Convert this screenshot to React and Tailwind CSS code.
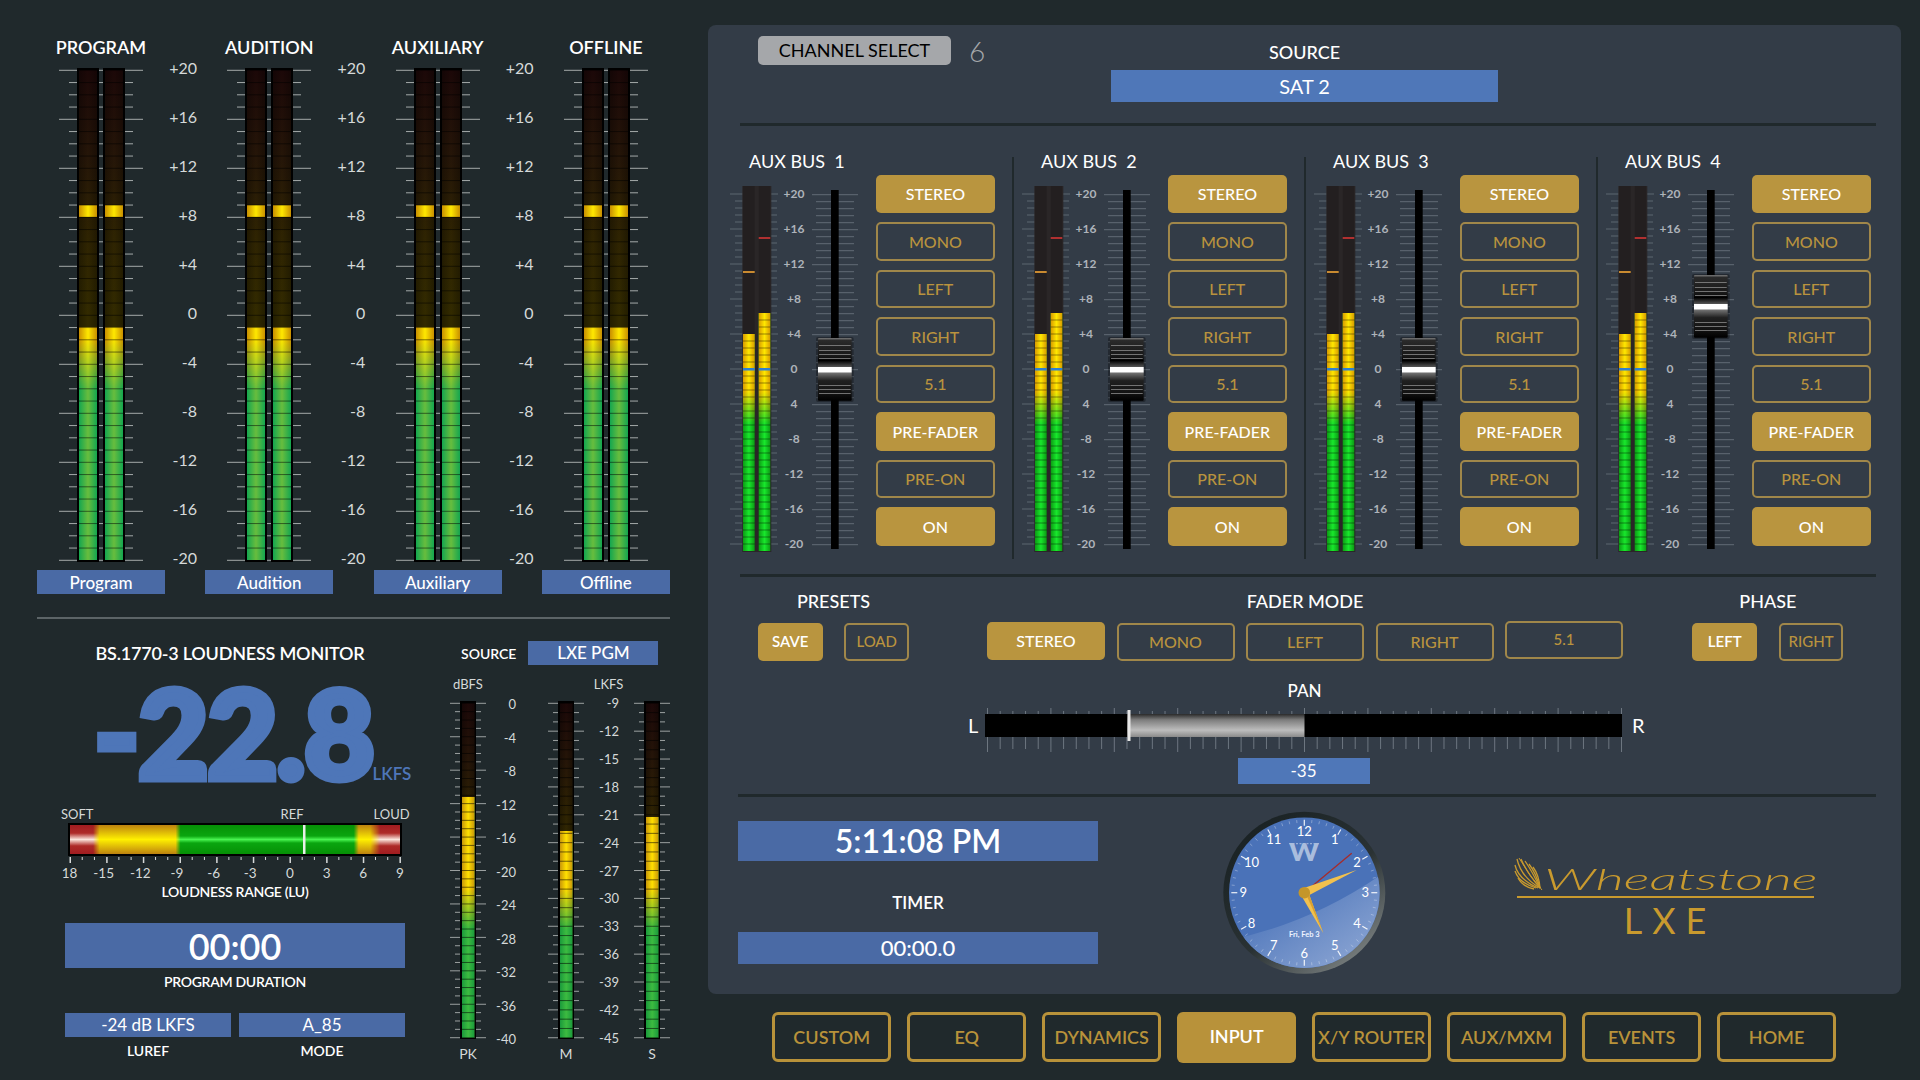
import React from 'react';

const makeTicks = (start, step, count, every) =>
  Array.from({ length: count }, (_, i) => ({ y: start + step * i, major: i % every === 0 }));

function Meter({ id, w, h, bars, frames, ticks, majorX, minorX, tickColor, bottom, yellowEnd, greenStart, green, yellow, unlit, seg, segStep }) {
  const segs = segStep ? makeTicks(ticks[0].y, segStep, Math.floor((ticks[ticks.length - 1].y - ticks[0].y) / segStep) + 1, 1) : ticks;
  return (
    <svg width={w} height={h} className="block shrink-0">
      <defs>
        <linearGradient id={`${id}g`}><stop offset="0" stopColor={green[0]} /><stop offset=".5" stopColor={green[1]} /><stop offset="1" stopColor={green[0]} /></linearGradient>
        <linearGradient id={`${id}y`}><stop offset="0" stopColor={yellow[0]} /><stop offset=".5" stopColor={yellow[1]} /><stop offset="1" stopColor={yellow[0]} /></linearGradient>
        <linearGradient id={`${id}s`}><stop offset="0" stopColor="#000" stopOpacity=".3" /><stop offset=".5" stopColor="#000" stopOpacity="0" /><stop offset="1" stopColor="#000" stopOpacity=".3" /></linearGradient>
        <linearGradient id={`${id}u`} x1="0" y1="0" x2="0" y2="1">
          {unlit.map(([o, c]) => <stop key={o} offset={o} stopColor={c} />)}
        </linearGradient>
        <linearGradient id={`${id}f`} gradientUnits="userSpaceOnUse" x1="0" x2="0" y1={yellowEnd} y2={greenStart}><stop offset="0" stopColor="#fff" /><stop offset="1" stopColor="#000" /></linearGradient>
        <mask id={`${id}m`} maskUnits="userSpaceOnUse" x="0" y="0" width={w} height={h}><rect x="0" y="0" width={w} height={h} fill={`url(#${id}f)`} /></mask>
      </defs>
      {ticks.map((t, i) => {
        const [a, b] = t.major ? majorX : minorX;
        return <rect key={i} x={a} y={t.y - 0.5} width={b - a} height="1" fill={tickColor} />;
      })}
      {frames.map((f, i) => <rect key={i} x={f.x} y="0" width={f.w} height={h} fill={f.fill} />)}
      {bars.map((b, i) => (
        <g key={i}>
          <rect x={b.x} y={b.top} width={b.w} height={bottom - b.top} fill={`url(#${id}u)`} />
          <rect x={b.x} y={b.top} width={b.w} height={bottom - b.top} fill={`url(#${id}s)`} opacity={b.shade ?? 1} />
          <rect x={b.x} y={b.level} width={b.w} height={bottom - b.level} fill={`url(#${id}g)`} />
          <rect x={b.x} y={b.level} width={b.w} height={bottom - b.level} fill={`url(#${id}y)`} mask={`url(#${id}m)`} />
          {b.peak && <rect x={b.x} y={b.peak[0]} width={b.w} height={b.peak[1]} fill={b.peak[2] || `url(#${id}y)`} />}
          {segs.map((t, k) => t.y > (segStep ? b.level : b.top) && t.y < bottom && (
            <rect key={k} x={b.x} y={t.y - 0.5} width={b.w} height="1" fill={seg} />
          ))}
          {b.blue && <rect x={b.x} y={b.blue} width={b.w} height="2.5" fill="#2f7fd0" />}
        </g>
      ))}
    </svg>
  );
}

const darkUnlit = [[0, '#1c0808'], [0.18, '#261608'], [0.34, '#2f2402'], [0.5, '#332b00'], [1, '#332b00']];

function MainColumn({ id, title, chip }) {
  return (
    <div className="flex w-[128px] flex-col items-center">
      <div className="mb-[10px] h-[22px] text-[18px] leading-[22px] font-semibold whitespace-nowrap text-white">{title}</div>
      <Meter
        id={id}
        w={84}
        h={494}
        ticks={makeTicks(2.3, 12.25, 41, 4)}
        majorX={[0, 84]}
        minorX={[10, 74]}
        tickColor="#a3a8a8"
        frames={[{ x: 18, w: 22, fill: '#000' }, { x: 44, w: 22, fill: '#000' }]}
        bars={[
          { x: 20, w: 18, top: 2, level: 259, peak: [137, 12] },
          { x: 46, w: 18, top: 2, level: 259, peak: [137, 12] },
        ]}
        bottom={492}
        yellowEnd={271}
        greenStart={322}
        green={['#14a650', '#68bd3e']}
        yellow={['#c88f00', '#ffe800']}
        unlit={darkUnlit}
        seg="rgba(0,0,0,.5)"
      />
      <div className="mt-[8px] flex h-[24px] w-[128px] items-center justify-center bg-[#4a6aa5] pt-px text-[17px] font-medium text-white">{chip}</div>
    </div>
  );
}

const mainScale = ['+20', '+16', '+12', '+8', '+4', '0', '-4', '-8', '-12', '-16', '-20'];

function MainScale() {
  return (
    <div className="flex w-[40.3px] flex-col pt-[7.7px] pr-[8.3px]">
      {mainScale.map((l) => (
        <div key={l} className="flex h-[49px] shrink-0 items-center justify-end text-[16px] text-[#d5d9d9]">{l}</div>
      ))}
    </div>
  );
}

function SmallMeter({ id, level, stepTicks, every }) {
  return (
    <Meter
      id={id}
      w={36}
      h={338}
      ticks={makeTicks(2.3, stepTicks, Math.round(334.4 / stepTicks) + 1, every)}
      majorX={[0, 36]}
      minorX={[5, 31]}
      tickColor="#9ba0a0"
      frames={[{ x: 10, w: 16, fill: '#000' }]}
      bars={[{ x: 12, w: 12.5, top: 2, level }]}
      bottom={337}
      yellowEnd={188}
      greenStart={228}
      green={['#1a9a3c', '#3dbb40']}
      yellow={['#c8960a', '#ffe000']}
      unlit={darkUnlit}
      seg="rgba(0,0,0,.55)"
    />
  );
}

const luTicks = Array.from({ length: 28 }, (_, i) => i);
const luLabels = ['-18', '-15', '-12', '-9', '-6', '-3', '0', '3', '6', '9'];

function LoudnessBar() {
  return (
    <svg width="336" height="41" className="block">
      <defs>
        <linearGradient id="luR" x1="0" y1="0" x2="0" y2="1"><stop offset="0" stopColor="#a01c20" /><stop offset=".28" stopColor="#ae2a28" /><stop offset=".5" stopColor="#fbe4dc" /><stop offset=".72" stopColor="#ae2a28" /><stop offset="1" stopColor="#a01c20" /></linearGradient>
        <linearGradient id="luY" x1="0" y1="0" x2="0" y2="1"><stop offset="0" stopColor="#bd820f" /><stop offset=".5" stopColor="#fff000" /><stop offset="1" stopColor="#bd820f" /></linearGradient>
        <linearGradient id="luG" x1="0" y1="0" x2="0" y2="1"><stop offset="0" stopColor="#069006" /><stop offset=".38" stopColor="#0aa50f" /><stop offset=".5" stopColor="#48f450" /><stop offset=".62" stopColor="#0aa50f" /><stop offset="1" stopColor="#069006" /></linearGradient>
        <linearGradient id="luYm" gradientUnits="userSpaceOnUse" x1="2" x2="332" y1="0" y2="0">
          <stop offset=".07" stopColor="#000" /><stop offset=".09" stopColor="#fff" /><stop offset=".91" stopColor="#fff" /><stop offset=".94" stopColor="#000" />
        </linearGradient>
        <linearGradient id="luGm" gradientUnits="userSpaceOnUse" x1="2" x2="332" y1="0" y2="0">
          <stop offset=".32" stopColor="#000" /><stop offset=".335" stopColor="#fff" /><stop offset=".86" stopColor="#fff" /><stop offset=".875" stopColor="#000" />
        </linearGradient>
        <mask id="luYk" maskUnits="userSpaceOnUse" x="0" y="0" width="336" height="41"><rect width="336" height="41" fill="url(#luYm)" /></mask>
        <mask id="luGk" maskUnits="userSpaceOnUse" x="0" y="0" width="336" height="41"><rect width="336" height="41" fill="url(#luGm)" /></mask>
      </defs>
      <rect x="0" y="0" width="334" height="33" fill="#000" />
      <rect x="2" y="2" width="330" height="29" fill="url(#luR)" />
      <rect x="2" y="2" width="330" height="29" fill="url(#luY)" mask="url(#luYk)" />
      <rect x="2" y="2" width="330" height="29" fill="url(#luG)" mask="url(#luGk)" />
      <rect x="235" y="2" width="2.5" height="29" fill="#e8f0e8" />
      {luTicks.map((i) => (
        <rect key={i} x={1.5 + i * 12.22} y="34" width={i % 3 === 0 ? 1.5 : 1} height={i % 3 === 0 ? 6 : 3} fill="#d6d9d9" />
      ))}
    </svg>
  );
}

function LeftPanel() {
  return (
    <div className="flex w-[633px] shrink-0 flex-col pt-[36px]">
      <div className="flex">
        <MainColumn id="m1" title="PROGRAM" chip="Program" />
        <MainScale />
        <MainColumn id="m2" title="AUDITION" chip="Audition" />
        <MainScale />
        <MainColumn id="m3" title="AUXILIARY" chip="Auxiliary" />
        <MainScale />
        <MainColumn id="m4" title="OFFLINE" chip="Offline" />
      </div>
      <div className="mt-[23px] h-[2px] w-[633px] bg-[#5c6467]" />
      <div className="flex">
        <div className="ml-[28px] flex w-[340px] flex-col">
          <div className="mt-[23px] h-[22px] pr-[10px] text-center text-[18px] leading-[22px] font-semibold tracking-[-0.2px] whitespace-nowrap text-white">BS.1770-3 LOUDNESS MONITOR</div>
          <div className="mt-[8px] flex h-[118px] items-end pl-[29px]">
            <span className="text-[122px] leading-[116px] font-black tracking-[-1.5px] whitespace-nowrap text-[#4e76b8] [-webkit-text-stroke:7px_#4e76b8]">-22.8</span>
            <span className="mb-[6px] -ml-[1px] text-[17px] leading-[20px] font-semibold text-[#4e76b8]">LKFS</span>
          </div>
          <div className="mt-[16px] flex h-[18px] items-center text-[13px] text-[#d5d9d9]">
            <span className="-ml-[4px]">SOFT</span>
            <span className="ml-[187px]">REF</span>
            <span className="ml-[70px]">LOUD</span>
          </div>
          <div className="-mt-[1px] ml-[3px]"><LoudnessBar /></div>
          <div className="mt-[-1px] -ml-[3px] h-[18px] w-[350px] overflow-hidden pl-[8px]">
            <div className="flex h-[18px] w-[330px] justify-between text-[13.5px] whitespace-nowrap text-[#d5d9d9]">
              {luLabels.map((l) => (
                <div key={l} className={`flex w-0 justify-center ${l.startsWith('-') ? '-translate-x-[3px]' : ''}`}>{l}</div>
              ))}
            </div>
          </div>
          <div className="mt-[1px] text-center text-[14px] leading-[20px] font-semibold tracking-[-0.3px] text-white">LOUDNESS RANGE (LU)</div>
          <div className="mt-[21px] flex h-[45px] items-center justify-center bg-[#4a6aa5] text-[36px] font-semibold text-white">00:00</div>
          <div className="mt-[4px] text-center text-[14px] leading-[20px] font-semibold tracking-[-0.3px] text-white">PROGRAM DURATION</div>
          <div className="mt-[21px] flex gap-[8px]">
            <div className="flex h-[24px] flex-1 items-center justify-center bg-[#4a6aa5] text-[17px] text-white">-24 dB LKFS</div>
            <div className="flex h-[24px] flex-1 items-center justify-center bg-[#4a6aa5] text-[17px] text-white">A_85</div>
          </div>
          <div className="mt-[4px] flex gap-[8px] text-center text-[14px] leading-[20px] font-semibold text-white">
            <div className="flex-1">LUREF</div>
            <div className="flex-1">MODE</div>
          </div>
        </div>
        <div className="ml-[45px] flex w-[220px] flex-col">
          <div className="mt-[22px] flex h-[24px] items-center">
            <span className="ml-[11px] text-[14px] font-semibold text-white">SOURCE</span>
            <div className="ml-[12px] flex h-[24px] w-[130px] items-center justify-center bg-[#4a6aa5] text-[17px] font-medium text-white">LXE PGM</div>
          </div>
          <div className="mt-[11px] flex h-[18px] items-center text-[13px] text-[#d5d9d9]">
            <span className="ml-[3px]">dBFS</span>
            <span className="ml-[111px]">LKFS</span>
          </div>
          <div className="mt-[7px] flex h-[338px] text-[13px] text-[#d5d9d9]">
            <SmallMeter id="pk" level={96} stepTicks={8.36} every={4} />
            <div className="-mt-[13px] flex w-[30px] shrink-0 flex-col">
              {['0', '-4', '-8', '-12', '-16', '-20', '-24', '-28', '-32', '-36', '-40'].map((l) => (
                <div key={l} className="flex h-[33.55px] shrink-0 items-center justify-end">{l}</div>
              ))}
            </div>
            <div className="ml-[32px]"><SmallMeter id="mm" level={130} stepTicks={9.29} every={3} /></div>
            <div className="-mt-[11px] ml-[6px] flex w-[29px] shrink-0 flex-col">
              {['-9', '-12', '-15', '-18', '-21', '-24', '-27', '-30', '-33', '-36', '-39', '-42', '-45'].map((l) => (
                <div key={l} className="flex h-[27.9px] shrink-0 items-center justify-end">{l}</div>
              ))}
            </div>
            <div className="ml-[15px]"><SmallMeter id="ss" level={116} stepTicks={9.29} every={3} /></div>
          </div>
          <div className="mt-[4px] flex h-[20px] items-center text-[14px] text-[#d5d9d9]">
            <span className="w-[36px] text-center">PK</span>
            <span className="ml-[62px] w-[36px] text-center">M</span>
            <span className="ml-[50px] w-[36px] text-center">S</span>
          </div>
        </div>
      </div>
    </div>
  );
}

function Btn({ on, children, cls = 'h-[38.3px] w-[118.7px]', text = 'text-[16px]' }) {
  return (
    <div className={`flex shrink-0 items-center justify-center rounded-[5px] font-medium ${text} ${cls} ${on ? 'bg-[#b9953f] text-white' : 'border-2 border-[#a0874a] text-[#b9933e]'}`}>{children}</div>
  );
}

const faderTicks = makeTicks(4.7, 7, 51, 5);
const auxLabels = ['+20', '+16', '+12', '+8', '+4', '0', '4', '-8', '-12', '-16', '-20'];
const capRidges = [7, 12, 16, 20, 47, 51, 55];

function Fader({ id, capY }) {
  return (
    <svg width="46" height="359" className="block shrink-0 overflow-visible">
      <defs>
        <linearGradient id={`${id}c`} x1="0" y1="0" x2="0" y2="1">
          <stop offset="0" stopColor="#7a7a7a" /><stop offset=".04" stopColor="#2a2a2a" /><stop offset=".3" stopColor="#161616" /><stop offset=".36" stopColor="#000" />
          <stop offset=".46" stopColor="#555" /><stop offset=".47" stopColor="#fff" /><stop offset=".54" stopColor="#fff" /><stop offset=".56" stopColor="#707070" />
          <stop offset=".68" stopColor="#202020" /><stop offset=".86" stopColor="#141414" /><stop offset="1" stopColor="#000" />
        </linearGradient>
      </defs>
      {faderTicks.map((t, i) => {
        const [a, b] = t.major ? [0, 46] : [4, 42];
        return <rect key={i} x={a} y={t.y - 0.5} width={b - a} height="1" fill="#626c76" />;
      })}
      <rect x="19" y="0" width="7.7" height="359" fill="#000" />
      <g transform={`translate(6 ${capY})`}>
        <rect x="-2" y="-1" width="37.7" height="65" rx="2" fill="#000" opacity=".3" />
        <rect width="33.7" height="62.7" rx="1" fill={`url(#${id}c)`} />
        {capRidges.map((y) => <rect key={y} x="1" y={y} width="31.7" height="0.8" fill="#8a8a8a" />)}
      </g>
    </svg>
  );
}

function AuxColumn({ n, capY, last }) {
  const id = `a${n}`;
  return (
    <div className={`flex h-[402px] w-[292px] shrink-0 flex-col ${last ? '' : 'border-r-2 border-[#20292c]'}`}>
      <div className="-mt-[6px] ml-[27px] h-[20px] text-[18px] leading-[20px] whitespace-pre text-white">AUX BUS  {n}</div>
      <div className="mt-[4px] flex">
        <div className="mt-[11px] ml-[8px]">
          <Meter
            id={id}
            w={48}
            h={366}
            ticks={makeTicks(8, 7, 51, 5)}
            majorX={[0, 48]}
            minorX={[5, 47]}
            tickColor="#5d6771"
            frames={[{ x: 12.3, w: 29, fill: '#2a2627' }]}
            bars={[
              { x: 13, w: 11.7, top: 0, level: 148, peak: [85, 2, '#c98a30'], blue: 182, shade: 0 },
              { x: 28.7, w: 11.6, top: 0, level: 127, peak: [51, 2, '#b03030'], blue: 182, shade: 0 },
            ]}
            bottom={365}
            yellowEnd={205}
            greenStart={238}
            green={['#0c9a14', '#18e82c']}
            yellow={['#d89a00', '#ffe800']}
            unlit={[[0, '#231f20'], [1, '#231f20']]}
            seg="rgba(0,0,0,.4)"
            segStep={7}
          />
        </div>
        <div className="mt-[1.5px] ml-px flex w-[30px] shrink-0 flex-col text-[12px] font-bold text-[#aeb3ba]">
          {auxLabels.map((l, i) => (
            <div key={i} className="flex h-[35px] shrink-0 items-center justify-center">{l}</div>
          ))}
        </div>
        <div className="mt-[15px] ml-[3px]"><Fader id={id} capY={capY} /></div>
        <div className="ml-[18px] flex flex-col gap-[9.2px]">
          <Btn on>STEREO</Btn>
          <Btn>MONO</Btn>
          <Btn>LEFT</Btn>
          <Btn>RIGHT</Btn>
          <Btn>5.1</Btn>
          <Btn on>PRE-FADER</Btn>
          <Btn>PRE-ON</Btn>
          <Btn on>ON</Btn>
        </div>
      </div>
    </div>
  );
}

const panTicks = Array.from({ length: 51 }, (_, i) => i);

function PanSlider() {
  return (
    <svg width="638" height="44" className="block shrink-0 overflow-visible">
      <defs>
        <linearGradient id="panG" x1="0" y1="0" x2="0" y2="1">
          <stop offset="0" stopColor="#2a2a2a" /><stop offset=".25" stopColor="#7c7c7c" /><stop offset=".7" stopColor="#bdbdbd" /><stop offset="1" stopColor="#8a8a8a" />
        </linearGradient>
      </defs>
      {panTicks.map((i) => {
        const major = i % 5 === 0;
        return (
          <g key={i} fill="#6d7680">
            <rect x={2 + i * 12.68} y={major ? 0 : 3} width="1" height={major ? 6 : 3} />
            <rect x={2 + i * 12.68} y="29" width="1" height={major ? 15 : 12} />
          </g>
        );
      })}
      <rect x="0" y="6" width="637" height="23" fill="#000" />
      <rect x="142.5" y="6" width="177" height="23" fill="url(#panG)" />
      <rect x="142.5" y="2" width="3" height="31" fill="#e6e6e6" />
    </svg>
  );
}

function Clock() {
  const cx = 94.3;
  const cy = 92.7;
  return (
    <svg width="180" height="180" className="block shrink-0">
      <defs>
        <linearGradient id="ckR" x1="0.15" y1="0.1" x2="0.85" y2="0.95">
          <stop offset="0" stopColor="#1a2224" /><stop offset=".55" stopColor="#2a3234" /><stop offset="1" stopColor="#7e8484" />
        </linearGradient>
        <linearGradient id="ckW" x1="0.15" y1="0.4" x2="0.85" y2="1">
          <stop offset="0" stopColor="#4d75ba" /><stop offset="1" stopColor="#93abd6" />
        </linearGradient>
        <clipPath id="ckC"><circle cx={cx} cy={cy} r="75.3" /></clipPath>
      </defs>
      <circle cx={cx} cy={cy} r="81" fill="url(#ckR)" />
      <circle cx={cx} cy={cy} r="75.3" fill="#4a72b8" />
      <path d="M10 142 Q 100 125 175 72 L 180 180 L 0 180 Z" fill="url(#ckW)" clipPath="url(#ckC)" />
      {Array.from({ length: 60 }, (_, i) => {
        const a = (i * Math.PI) / 30;
        const major = i % 5 === 0;
        const r1 = major ? 67 : 70;
        const r2 = 73;
        return (
          <line key={i} x1={cx + r1 * Math.sin(a)} y1={cy - r1 * Math.cos(a)} x2={cx + r2 * Math.sin(a)} y2={cy - r2 * Math.cos(a)} stroke="#fff" strokeOpacity={major ? 0.9 : 0.4} strokeWidth={major ? 1.2 : 0.8} />
        );
      })}
      {[12, 1, 2, 3, 4, 5, 6, 7, 8, 9, 10, 11].map((n) => {
        const a = (n * Math.PI) / 6;
        return (
          <text key={n} x={cx + 61 * Math.sin(a)} y={cy - 61 * Math.cos(a) + 4.5} textAnchor="middle" fontSize="13" fill="#fff" fontFamily="Lato, sans-serif">{n}</text>
        );
      })}
      <line x1="79" x2="110" y1="43.7" y2="43.7" stroke="#a9bddd" strokeWidth="1" strokeDasharray="2 1.5" />
      <text x="79" y="61" fontSize="25" fontWeight="900" fill="#a9bddd" fontFamily="Lato, sans-serif" textLength="30" lengthAdjust="spacingAndGlyphs">W</text>
      <text x={cx} y="137" textAnchor="middle" fontSize="7.5" fontWeight="700" fill="#eef3ff" fontFamily="Lato, sans-serif">Fri, Feb 3</text>
      <line x1={cx} y1={cy} x2="141.7" y2="53.3" stroke="#a52c2c" strokeWidth="1.4" />
      <polygon points="96.1,96.8 92.5,88.6 146.7,70" fill="#f2c14e" />
      <polygon points="97.9,91 90.7,94.4 113.3,133.3" fill="#f2c14e" />
      <polygon points="97.9,91 113.3,133.3 96,94" fill="#d9a030" />
      <circle cx={cx} cy={cy} r="5.8" fill="#c4962a" />
    </svg>
  );
}

function Feather() {
  const barbs = ['M3 2 Q7 20 26 31', 'M7 2 Q13 16 26 31', 'M11 4 Q18 14 26 31', 'M15 7 Q22 16 26 31', 'M1 8 Q4 22 24 31', 'M1 14 Q5 26 22 31', 'M4 21 Q9 30 20 32', 'M19 10 Q25 18 26 31'];
  return (
    <svg width="30" height="34" className="block shrink-0">
      {barbs.map((d) => <path key={d} d={d} fill="none" stroke="#c99a2e" strokeWidth="1.3" />)}
      <path d="M5 1 Q16 20 28 33" fill="none" stroke="#c99a2e" strokeWidth="1" />
    </svg>
  );
}

function RightPanel() {
  return (
    <div className="flex w-[1212px] shrink-0 flex-col">
      <div className="mt-[25px] ml-[38px] flex h-[969px] w-[1193px] flex-col rounded-[8px] bg-[#333c47]">
        <div className="flex h-[98px] pt-[11px]">
          <div className="flex w-[403px] items-start pl-[50px]">
            <div className="flex h-[29px] w-[193px] items-center justify-center rounded-[5px] bg-[#a5a7aa] text-[18px] text-black">CHANNEL SELECT</div>
            <div className="ml-[18px] -mt-[2px] text-[28px] leading-[34px] font-light text-[#a5a7aa]">6</div>
          </div>
          <div className="flex w-[387px] flex-col">
            <div className="flex h-[34px] items-center justify-center pb-[2px] text-[18px] font-medium text-white">SOURCE</div>
            <div className="flex h-[32px] items-center justify-center bg-[#4f77b8] text-[20px] text-white">SAT 2</div>
          </div>
        </div>
        <div className="ml-[32px] h-[3px] w-[1136px] bg-[#20292c]" />
        <div className="mt-[31px] ml-[14px] flex">
          <AuxColumn n={1} capY={148} />
          <AuxColumn n={2} capY={148} />
          <AuxColumn n={3} capY={148} />
          <AuxColumn n={4} capY={85} last />
        </div>
        <div className="mt-[14.5px] ml-[32px] h-[3px] w-[1136px] bg-[#20292c]" />
        <div className="mt-[15px] flex pl-[50px]">
          <div className="flex w-[151px] flex-col">
            <div className="flex h-[20px] items-center justify-center text-[18px] font-medium text-white">PRESETS</div>
            <div className="mt-[11px] flex justify-between">
              <Btn on cls="h-[38.3px] w-[64.6px]" text="text-[15px] font-semibold">SAVE</Btn>
              <Btn cls="h-[38.3px] w-[64.6px]" text="text-[15px]">LOAD</Btn>
            </div>
          </div>
          <div className="ml-[78px] flex w-[636px] flex-col">
            <div className="flex h-[20px] items-center justify-center text-[18px] font-medium text-white">FADER MODE</div>
            <div className="mt-[11px] flex justify-between">
              <Btn on cls="h-[38.3px] w-[118px] -translate-y-px">STEREO</Btn>
              <Btn cls="h-[38.3px] w-[118px]">MONO</Btn>
              <Btn cls="h-[38.3px] w-[118px]">LEFT</Btn>
              <Btn cls="h-[38.3px] w-[118px]">RIGHT</Btn>
              <Btn cls="h-[38.3px] w-[118px] -translate-y-[2px]" text="text-[15px]">5.1</Btn>
            </div>
          </div>
          <div className="ml-[69.4px] flex w-[151px] flex-col">
            <div className="flex h-[20px] items-center justify-center text-[18px] font-medium text-white">PHASE</div>
            <div className="mt-[11px] flex justify-between">
              <Btn on cls="h-[38.3px] w-[64.6px]" text="text-[15px] font-semibold">LEFT</Btn>
              <Btn cls="h-[38.3px] w-[64.6px]" text="text-[15px]">RIGHT</Btn>
            </div>
          </div>
        </div>
        <div className="mt-[20px] flex h-[20px] items-center justify-center text-[17px] font-medium text-white">PAN</div>
        <div className="mt-[7px] ml-[260px] flex">
          <div className="w-[17px] pt-[4px] text-[20px] leading-[26px] text-white">L</div>
          <PanSlider />
          <div className="ml-[9px] pt-[4px] text-[20px] leading-[26px] text-white">R</div>
        </div>
        <div className="mt-[6px] flex justify-center">
          <div className="-translate-x-px flex h-[26px] w-[132px] items-center justify-center bg-[#4f77b8] text-[17px] text-white">-35</div>
        </div>
        <div className="mt-[10px] ml-[30px] h-[3px] w-[1138px] bg-[#20292c]" />
        <div className="flex">
          <div className="mt-[24px] ml-[30px] flex w-[360px] flex-col">
            <div className="flex h-[40px] items-center justify-center bg-[#4a6aa5] text-[32px] font-semibold text-white">5:11:08 PM</div>
            <div className="mt-[31px] flex h-[22px] items-center justify-center text-[17px] font-semibold text-white">TIMER</div>
            <div className="mt-[18px] flex h-[32px] items-center justify-center bg-[#4a6aa5] text-[22px] font-medium text-white">00:00.0</div>
          </div>
          <div className="mt-[3px] ml-[112px]"><Clock /></div>
          <div className="mt-[60px] ml-[124px] flex w-[302px] flex-col">
            <div className="flex h-[34px] items-end">
              <Feather />
              <span className="mb-[-4px] origin-left scale-x-[1.83] text-[30px] leading-[34px] font-light whitespace-nowrap text-[#c99a2e] italic">Wheatstone</span>
            </div>
            <div className="mt-[5px] ml-[3px] h-[2px] w-[297px] bg-[#c99a2e]" />
            <div className="mt-[1px] pl-[10px] text-center text-[36px] leading-[42px] font-normal tracking-[10px] text-[#c99a2e]">LXE</div>
          </div>
        </div>
      </div>
      <div className="mt-[18px] ml-[102px] flex items-start gap-[15.6px]">
        {['CUSTOM', 'EQ', 'DYNAMICS', 'INPUT', 'X/Y ROUTER', 'AUX/MXM', 'EVENTS', 'HOME'].map((t) => (
          <div
            key={t}
            className={`flex w-[119.4px] items-center justify-center rounded-[6px] text-[18px] font-semibold whitespace-nowrap ${t === 'INPUT' ? 'h-[51px] bg-[#b8923a] pb-[2px] text-white' : 'h-[50px] border-[3px] border-[#b8923a] text-[#b8923a]'}`}
          >
            {t}
          </div>
        ))}
      </div>
    </div>
  );
}

export default function App() {
  return (
    <div className="flex h-[1080px] w-[1920px] overflow-hidden bg-[#20292c] pl-[37px] font-['Lato',sans-serif]">
      <LeftPanel />
      <RightPanel />
    </div>
  );
}
